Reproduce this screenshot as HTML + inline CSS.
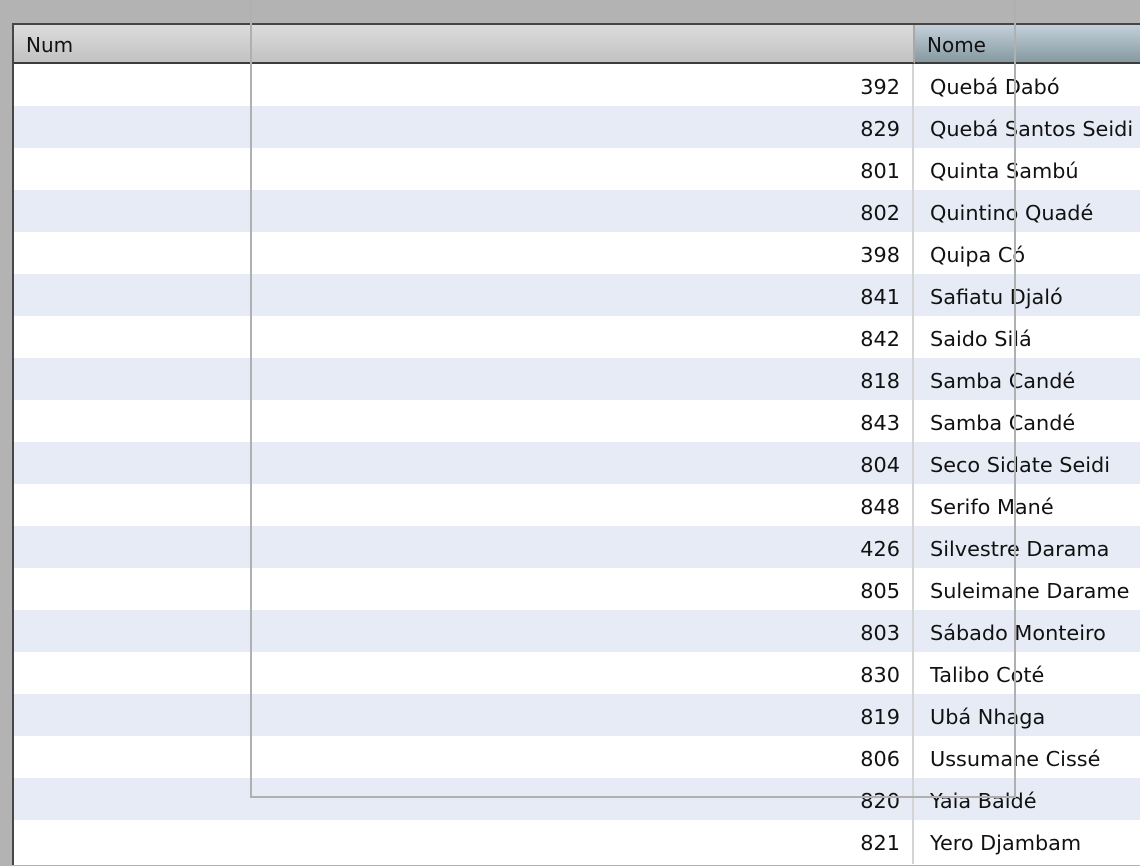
<!DOCTYPE html><html><head><style>
body{margin:0;width:1140px;height:852px;background:#b3b3b3;overflow:hidden;position:relative;font-family:"DejaVu Sans","Liberation Sans",sans-serif;font-size:20.8px;color:#111}
#t{position:absolute;left:12px;top:23px;width:1140px;height:840px;border-left:2px solid #464646;border-top:2px solid #464646;background:#fff}
.h{position:absolute;top:0;height:37px;line-height:40px;border-bottom:2px solid #3c3c3c;font-size:20px}
.r{position:absolute;left:0;width:1130px;height:42px;line-height:46px}
.n{position:absolute;right:240px;width:200px;text-align:right}
.m{position:absolute;left:916px}
.ln{position:absolute;background:#b0b0b0}
</style></head><body>
<div id="t">
<div class="h" style="left:0;width:887px;background:linear-gradient(#dcdcdc,#c2c2c2);padding-left:12px;border-right:2px solid #a8a8a8">Num</div>
<div class="h" style="left:901px;width:227px;background:linear-gradient(#c4d0da,#869aa0);padding-left:12px">Nome</div>
<div id="rows"></div>
<div style="position:absolute;left:898px;top:39px;width:2px;height:800px;background:#d4d4d4"></div>
</div>
<div class="ln" style="left:250px;top:0;width:2px;height:798px"></div>
<div class="ln" style="left:1014px;top:0;width:2px;height:798px"></div>
<div class="ln" style="left:250px;top:796px;width:766px;height:2px"></div>
<script>
var d=[["392","Quebá Dabó"],["829","Quebá Santos Seidi"],["801","Quinta Sambú"],["802","Quintino Quadé"],["398","Quipa Có"],["841","Safiatu Djaló"],["842","Saido Silá"],["818","Samba Candé"],["843","Samba Candé"],["804","Seco Sidate Seidi"],["848","Serifo Mané"],["426","Silvestre Darama"],["805","Suleimane Darame"],["803","Sábado Monteiro"],["830","Talibo Coté"],["819","Ubá Nhaga"],["806","Ussumane Cissé"],["820","Yaia Baldé"],["821","Yero Djambam"]];
var h="";d.forEach(function(e,i){h+='<div class="r" style="top:'+(39+i*42)+'px;background:'+(i%2?'#e6ebf5':'#fff')+'"><span class="n" style="left:686px">'+e[0]+'</span><span class="m">'+e[1]+'</span></div>'});
document.getElementById("rows").innerHTML=h;
</script>
</body></html>
